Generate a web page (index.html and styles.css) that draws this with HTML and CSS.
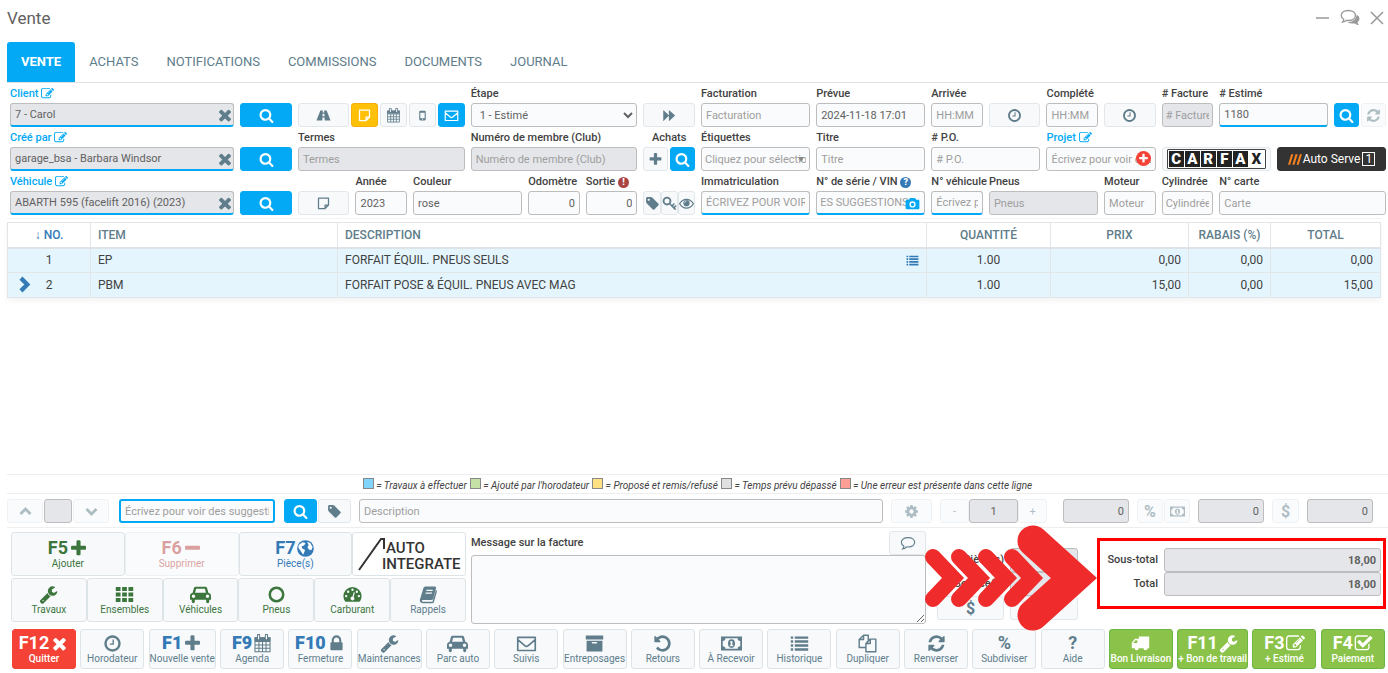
FILE: index.html
```html
<!DOCTYPE html>
<html lang="fr">
<head>
  <meta charset="UTF-8" />
  <meta name="viewport" content="width=device-width, initial-scale=1.0"/>
  <title>Vente</title>
  <link rel="stylesheet" href="styles.css">
</head>
<body>
  <!-- Icons -->
  <svg class="sprite" aria-hidden="true">
    <symbol id="search" viewBox="0 0 1792 1792"><path d="M1216 832q0-185-131.500-316.500t-316.500-131.500-316.500 131.500-131.500 316.500 131.500 316.500 316.500 131.500 316.500-131.500 131.500-316.500zm512 832q0 52-38 90t-90 38q-54 0-90-38l-343-342q-179 124-399 124-143 0-273.500-55.500t-225-150-150-225-55.500-273.500 55.500-273.500 150-225 225-150 273.500-55.500 273.500 55.500 225 150 150 225 55.500 273.500q0 220-124 399l343 343q37 37 37 90z"/></symbol>
    <symbol id="times" viewBox="0 0 1792 1792"><path d="M1490 1322q0 40-28 68l-136 136q-28 28-68 28t-68-28l-294-294-294 294q-28 28-68 28t-68-28l-136-136q-28-28-28-68t28-68l294-294-294-294q-28-28-28-68t28-68l136-136q28-28 68-28t68 28l294 294 294-294q28-28 68-28t68 28l136 136q28 28 28 68t-28 68l-294 294 294 294q28 28 28 68z"/></symbol>
    <symbol id="plus" viewBox="0 0 1792 1792"><path d="M1600 736v192q0 40-28 68t-68 28h-416v416q0 40-28 68t-68 28h-192q-40 0-68-28t-28-68v-416h-416q-40 0-68-28t-28-68v-192q0-40 28-68t68-28h416v-416q0-40 28-68t68-28h192q40 0 68 28t28 68v416h416q40 0 68 28t28 68z"/></symbol>
    <symbol id="minus" viewBox="0 0 1792 1792"><path d="M1600 736v192q0 40-28 68t-68 28h-1216q-40 0-68-28t-28-68v-192q0-40 28-68t68-28h1216q40 0 68 28t28 68z"/></symbol>
    <symbol id="clock" viewBox="0 0 1792 1792"><path d="M1024 544v448q0 14-9 23t-23 9h-320q-14 0-23-9t-9-23v-64q0-14 9-23t23-9h224v-352q0-14 9-23t23-9h64q14 0 23 9t9 23zm416 352q0-148-73-273t-198-198-273-73-273 73-198 198-73 273 73 273 198 198 273 73 273-73 198-198 73-273zm224 0q0 209-103 385.500t-279.500 279.500-385.500 103-385.500-103-279.500-279.500-103-385.500 103-385.500 279.500-279.500 385.500-103 385.500 103 279.500 279.500 103 385.500z"/></symbol>
    <symbol id="mail" viewBox="0 0 24 24"><path d="M2 5h20v15H2zM2 7.500l8 7q2 1.500 4 0l8-7" fill="none" stroke="currentColor" stroke-width="1.900" stroke-linejoin="round"/></symbol>
    <symbol id="wrench" viewBox="0 0 1792 1792"><path d="M448 1472q0-26-19-45t-45-19-45 19-19 45 19 45 45 19 45-19 19-45zm644-420l-682 682q-37 37-90 37-52 0-91-37l-106-108q-38-36-38-90 0-53 38-91l681-681q39 98 114.500 173.500t173.500 114.500zm634-435q0 39-23 106-47 134-164.500 217.500t-258.500 83.500q-185 0-316.500-131.500t-131.500-316.500 131.500-316.500 316.500-131.500q58 0 121.500 16.500t107.500 46.500q16 11 16 28t-16 28l-293 169v224l193 107q5-3 79-48.500t135.500-81 70.500-35.500q15 0 23.500 10t8.500 25z"/></symbol>
    <symbol id="lock" viewBox="0 0 1792 1792"><path d="M640 768h512v-192q0-106-75-181t-181-75-181 75-75 181v192zm832 96v576q0 40-28 68t-68 28h-960q-40 0-68-28t-28-68v-576q0-40 28-68t68-28h32v-192q0-184 132-316t316-132 316 132 132 316v192h32q40 0 68 28t28 68z"/></symbol>
    <symbol id="undo" viewBox="0 0 1792 1792"><path d="M1664 896q0 156-61 298t-164 245-245 164-298 61q-172 0-327-72.500t-264-204.500q-7-10-6.500-22.500t8.500-20.500l137-138q10-9 25-9 16 2 23 12 73 95 179 147t225 52q104 0 198.500-40.500t163.500-109.500 109.500-163.500 40.500-198.500-40.500-198.500-109.500-163.500-163.500-109.500-198.500-40.500q-98 0-188 35.500t-160 101.500l137 138q31 30 14 69-17 40-59 40h-448q-26 0-45-19t-19-45v-448q0-42 40-59 39-17 69 14l130 129q107-101 244.500-156.500t284.500-55.500q156 0 298 61t245 164 164 245 61 298z"/></symbol>
    <symbol id="refresh" viewBox="0 0 1792 1792"><path d="M1639 1056q0 5-1 7-64 268-268 434.500t-478 166.500q-146 0-282.500-55t-243.500-157l-129 129q-19 19-45 19t-45-19-19-45v-448q0-26 19-45t45-19h448q26 0 45 19t19 45-19 45l-137 137q71 66 161 102t187 36q134 0 250-65t186-179q11-17 53-117 8-23 30-23h192q13 0 22.500 9.500t9.500 22.500zm25-800v448q0 26-19 45t-45 19h-448q-26 0-45-19t-19-45 19-45l138-138q-148-137-349-137-134 0-250 65t-186 179q-11 17-53 117-8 23-30 23h-199q-13 0-22.500-9.500t-9.500-22.500v-7q65-268 270-434.500t480-166.500q146 0 284 55.500t245 156.500l130-129q19-19 45-19t45 19 19 45z"/></symbol>
    <symbol id="edit" viewBox="0 0 1792 1792"><path d="M888 1184l116-116-152-152-116 116v56h96v96h56zm440-720q-16-16-33 1l-350 350q-17 17-1 33t33-1l350-350q17-17 1-33zm80 594v190q0 119-84.500 203.500t-203.500 84.500h-832q-119 0-203.500-84.500t-84.500-203.500v-832q0-119 84.500-203.500t203.500-84.500h832q63 0 117 25 15 7 18 23 3 17-9 29l-49 49q-14 14-32 8-23-6-45-6h-832q-66 0-113 47t-47 113v832q0 66 47 113t113 47h832q66 0 113-47t47-113v-126q0-13 9-22l64-64q15-15 35-7t20 29zm-96-738l288 288-672 672h-288v-288zm444 132l-92 92-288-288 92-92q28-28 68-28t68 28l152 152q28 28 28 68t-28 68z"/></symbol>
    <symbol id="check" viewBox="0 0 1792 1792"><path d="M1472 930v318q0 119-84.500 203.500t-203.500 84.500h-832q-119 0-203.500-84.500t-84.500-203.500v-832q0-119 84.500-203.500t203.500-84.500h832q63 0 117 25 15 7 18 23 3 17-9 29l-49 49q-10 10-23 10-3 0-9-2-23-6-45-6h-832q-66 0-113 47t-47 113v832q0 66 47 113t113 47h832q66 0 113-47t47-113v-254q0-13 9-22l64-64q10-10 23-10 6 0 12 3 20 8 20 29zm231-489l-814 814q-24 24-57 24t-57-24l-430-430q-24-24-24-57t24-57l110-110q24-24 57-24t57 24l263 263 647-647q24-24 57-24t57 24l110 110q24 24 24 57t-24 57z"/></symbol>
    <symbol id="tag" viewBox="0 0 1792 1792"><path d="M576 448q0-53-37.500-90.500t-90.500-37.500-90.500 37.500-37.500 90.500 37.500 90.500 90.500 37.500 90.500-37.500 37.500-90.500zm1067 576q0 53-37 90l-491 492q-39 37-91 37-53 0-90-37l-715-716q-38-37-64.500-101t-26.500-117v-416q0-52 38-90t90-38h416q53 0 117 26.500t102 64.500l715 714q37 39 37 91z"/></symbol>
    <symbol id="cog" viewBox="0 0 1792 1792"><path d="M1152 896q0-106-75-181t-181-75-181 75-75 181 75 181 181 75 181-75 75-181zm512-109v222q0 12-8 23t-20 13l-185 28q-19 54-39 91 35 50 107 138 10 12 10 25t-9 23q-27 37-99 108t-94 71q-12 0-26-9l-138-108q-44 23-91 38-16 136-29 186-7 28-36 28h-222q-14 0-24.500-8.500t-11.500-21.500l-28-184q-49-16-90-37l-141 107q-10 9-25 9-14 0-25-11-126-114-165-168-7-10-7-23 0-12 8-23 15-21 51-66.500t54-70.500q-27-50-41-99l-183-27q-13-2-21-12.500t-8-23.500v-222q0-12 8-23t19-13l186-28q14-46 39-92-40-57-107-138-10-12-10-24 0-10 9-23 26-36 98.500-107.500t94.500-71.500q13 0 26 10l138 107q44-23 91-38 16-136 29-186 7-28 36-28h222q14 0 24.500 8.500t11.500 21.500l28 184q49 16 90 37l142-107q9-9 24-9 13 0 25 10 129 119 165 170 7 8 7 22 0 12-8 23-15 21-51 66.500t-54 70.500q26 50 41 98l183 28q13 2 21 12.500t8 23.500z"/></symbol>
    <symbol id="road" viewBox="0 0 24 24"><path fill-rule="evenodd" d="M7 4h4l-.3 3h2.600L13 4h4l6 15q.4 1-1 1h-8l-.4-5h-3.200L10 20H2q-1.400 0-1-1zM10.600 9l-.3 4h3.400l-.3-4z"/></symbol>
    <symbol id="note" viewBox="0 0 24 24"><path d="M4 3.500h16v11L14.500 20H4zM20 14.500h-5.500V20" fill="none" stroke="currentColor" stroke-width="2" stroke-linejoin="round"/></symbol>
    <symbol id="calendar" viewBox="0 0 24 24"><path d="M2.500 5h19v17.500h-19zM2.500 9.500h19M2.500 14h19M2.500 18h19M7.500 9.500v13M12 9.500v13M16.500 9.500v13" fill="none" stroke="currentColor" stroke-width="1.300"/><path d="M2 4h20v5H2z"/><path d="M7 1.500v5M17 1.500v5" stroke="currentColor" stroke-width="4" stroke-linecap="round"/><path d="M7 2v4M17 2v4" stroke="#fff" stroke-width="1.500" stroke-linecap="round"/></symbol>
    <symbol id="phone" viewBox="0 0 24 24"><path fill-rule="evenodd" d="M8 3h8q2 0 2 2v14q0 2-2 2H8q-2 0-2-2V5q0-2 2-2zm0 4v10h8V7zm4 11a1 1 0 100 2 1 1 0 000-2z"/></symbol>
    <symbol id="forward" viewBox="0 0 24 24"><path d="M2 3l9 8.500V3l10 9-10 9v-8.500L2 21z"/></symbol>
    <symbol id="key" viewBox="0 0 24 24"><circle cx="8" cy="8" r="5.500" fill="none" stroke="currentColor" stroke-width="3"/><path d="M12 12l9 9M16 16l3-3M19 19l3-3" stroke="currentColor" stroke-width="2.500" stroke-linecap="round"/></symbol>
    <symbol id="eye" viewBox="0 0 24 24"><path d="M1 12.500Q5 5.500 12 5.500t11 7q-4 7-11 7t-11-7z" fill="none" stroke="currentColor" stroke-width="2"/><circle cx="12" cy="11.500" r="5"/><path d="M9 11q0-3 3-3" fill="none" stroke="#fff" stroke-width="1"/></symbol>
    <symbol id="camera" viewBox="0 0 24 24"><path fill-rule="evenodd" d="M8 3h8l2 3h3q2 0 2 2v11q0 2-2 2H3q-2 0-2-2V8q0-2 2-2h3zm4 5.500a5 5 0 100 10 5 5 0 000-10zm0 2.200a2.800 2.800 0 110 5.600 2.800 2.800 0 010-5.600z"/></symbol>
    <symbol id="list" viewBox="0 0 24 24"><path d="M1 3h3v3H1zM6 3h17v3H6zM1 8h3v3H1zM6 8h17v3H6zM1 13h3v3H1zM6 13h17v3H6zM1 18h3v3H1zM6 18h17v3H6z"/></symbol>
    <symbol id="up" viewBox="0 0 24 24"><path d="M4 16l8-8 8 8" fill="none" stroke="currentColor" stroke-width="4.500"/></symbol>
    <symbol id="down" viewBox="0 0 24 24"><path d="M4 8l8 8 8-8" fill="none" stroke="currentColor" stroke-width="4.500"/></symbol>
    <symbol id="right" viewBox="0 0 24 24"><path d="M7 3l9 9-9 9" fill="none" stroke="currentColor" stroke-width="6"/></symbol>
    <symbol id="globe" viewBox="0 0 24 24"><circle cx="12" cy="12" r="10.500"/><path d="M3.500 7.500L8 4l4 1-1.500 3L7 9.500 8 12l3.500 2-2.500 6-3-5-3-4zM14 3.500l4 1.500 3 5-1.500 4-3-.5-2-3 1.500-3z" fill="#fff"/></symbol>
    <symbol id="th" viewBox="0 0 24 24"><path d="M1 2.500h6v5H1zM9 2.500h6v5H9zM17 2.500h6v5h-6zM1 9.500h6v5H1zM9 9.500h6v5H9zM17 9.500h6v5h-6zM1 16.500h6v5H1zM9 16.500h6v5H9zM17 16.500h6v5h-6z"/></symbol>
    <symbol id="car" viewBox="0 0 24 24"><path fill-rule="evenodd" d="M6.500 3h11q1.500 0 2 1.500L21 10q3 .5 3 3v5h-2v2q0 2-1.800 2T18.500 20v-2h-13v2q0 2-1.700 2T2 20v-2H0v-5q0-2.500 3-3l1.500-5.500Q5 3 6.500 3zM7 5.500L5.800 10h12.400L17 5.500zM4 12a2 2 0 100 4 2 2 0 000-4zm16 0a2 2 0 100 4 2 2 0 000-4z"/></symbol>
    <symbol id="circle" viewBox="0 0 24 24"><circle cx="12" cy="12" r="8.500" fill="none" stroke="currentColor" stroke-width="3.200"/></symbol>
    <symbol id="gauge" viewBox="0 0 24 24"><path fill-rule="evenodd" d="M12 2.500a11.500 11.500 0 0111.500 11.500q0 3.500-2 6.500-.4.500-1 .5h-17q-.6 0-1-.5-2-3-2-6.500A11.500 11.500 0 0112 2.500zM4 12.500a1.500 1.500 0 100 3 1.500 1.500 0 000-3zm2.500-5.500a1.500 1.500 0 100 3 1.500 1.500 0 000-3zM12 4.500a1.500 1.500 0 100 3 1.500 1.500 0 000-3zM17.500 7a1.500 1.500 0 100 3 1.500 1.500 0 000-3zm2.500 5.500a1.500 1.500 0 100 3 1.500 1.500 0 000-3zM13.500 9L12 14.500a2.500 2.500 0 101.500.5L15 9.500z"/></symbol>
    <symbol id="book" viewBox="0 0 24 24"><path fill-rule="evenodd" d="M8 2h12q2 0 1.500 2L18 17q-.5 2-2.500 2H5q-1.500 0-1.500 1T5 21h12l4.500-15q1.500 1 1 2.500L19 21q-.6 2-2.500 2H4.500Q1 22.500 1 19L5.500 4Q6 2 8 2zm1.500 4L9 7.500h8l.5-1.500zm-1 3.500L8 11h8l.5-1.500z"/></symbol>
    <symbol id="archive" viewBox="0 0 24 24"><path fill-rule="evenodd" d="M1 2h22v5H1zM2 8.500h20V22H2zM9.500 10q-1 0-1 1t1 1h5q1 0 1-1t-1-1z"/></symbol>
    <symbol id="money" viewBox="0 0 24 24"><path fill-rule="evenodd" d="M0 4h24v16H0zM5 6q0 3-3 3v6q3 0 3 3h14q0-3 3-3V9q-3 0-3-3zm7 1a4 5 0 110 10 4 5 0 010-10zm-2 3l1 1v3h-1v1h4v-1h-1V9h-1z"/></symbol>
    <symbol id="files" viewBox="0 0 24 24"><path d="M7 1.500h6V9l-3 3v5H1.500V7zM7 1.500V7H1.500M15 6.500h7.500v16H10V12zM15.500 6.500V12H10" fill="none" stroke="currentColor" stroke-width="1.800" stroke-linejoin="round"/></symbol>
    <symbol id="truck" viewBox="0 0 24 24"><path fill-rule="evenodd" d="M10 3h13v15h-2a2.600 2.600 0 01-5.200 0h-6a2.600 2.600 0 01-5.200 0H1v-7l4-5h5zM5.500 8L3 11.500h5V8z"/></symbol>
    <symbol id="comment" viewBox="0 0 24 24"><path d="M12 4c6 0 10 3 10 7s-4 7-10 7l-2-.2Q7 21 4 21q2-2 2-4-4-2-4-6c0-4 4-7 10-7z" fill="none" stroke="currentColor" stroke-width="1.700"/></symbol>
    <symbol id="comments" viewBox="0 0 24 24"><path d="M10 3c5 0 8.500 2.500 8.500 6S15 15 10 15l-2-.2Q5 17 3 17q1.500-1.500 1.500-3.500Q1.500 12 1.500 9c0-3.500 3.500-6 8.500-6z" fill="none" stroke="currentColor" stroke-width="1.600"/><path d="M20 8q3.500 1.500 3.500 5 0 2.500-2.500 4 0 2 2 3.500-3 0-5.500-2-5 .8-8.500-1.500 10 0 11-9z"/></symbol>
  </svg>

  <header class="titlebar">
    <h1>Vente</h1>
    <div class="window-actions">
      <button aria-label="Réduire"><svg viewBox="0 0 16 16"><path d="M1 8h13" stroke="currentColor" stroke-width="1.500"/></svg></button>
      <button class="chat" aria-label="Discussion"><svg><use href="#comments"/></svg></button>
      <button aria-label="Fermer"><svg viewBox="0 0 16 16"><path d="M2 2l12 12M14 2L2 14" stroke="currentColor" stroke-width="1.500"/></svg></button>
    </div>
  </header>

  <nav class="tabs">
    <a class="active" href="#vente">VENTE</a>
    <a href="#achats">ACHATS</a>
    <a href="#notifications">NOTIFICATIONS</a>
    <a href="#commissions">COMMISSIONS</a>
    <a href="#documents">DOCUMENTS</a>
    <a href="#journal">JOURNAL</a>
  </nav>

  <form class="sale-form">
    <!-- Client -->
    <div class="field span-4">
      <label class="linked" for="client">Client <svg><use href="#edit"/></svg></label>
      <div class="control"><input class="locked suggest" id="client" value="7 - Carol" readonly><button type="button" class="clear" aria-label="Effacer"><svg><use href="#times"/></svg></button></div>
    </div>
    <button type="button" class="btn primary" aria-label="Chercher client"><svg><use href="#search"/></svg></button>
    <div class="button-row span-3">
      <button type="button" class="btn grow" aria-label="Route"><svg><use href="#road"/></svg></button>
      <button type="button" class="btn warning" aria-label="Note"><svg><use href="#note"/></svg></button>
      <button type="button" class="btn" aria-label="Calendrier"><svg><use href="#calendar"/></svg></button>
      <button type="button" class="btn small-icon" aria-label="Mobile"><svg><use href="#phone"/></svg></button>
      <button type="button" class="btn primary" aria-label="Courriel"><svg><use href="#mail"/></svg></button>
    </div>
    <div class="field span-3"><label for="etape">Étape</label><select id="etape"><option>1 - Estimé</option></select></div>
    <button type="button" class="btn" aria-label="Étape suivante"><svg><use href="#forward"/></svg></button>
    <div class="field span-2"><label for="facturation">Facturation</label><input id="facturation" placeholder="Facturation"></div>
    <div class="field span-2"><label for="prevue">Prévue</label><input id="prevue" value="2024-11-18 17:01"></div>
    <div class="field"><label for="arrivee">Arrivée</label><input id="arrivee" placeholder="HH:MM"></div>
    <button type="button" class="btn" aria-label="Heure d'arrivée"><svg><use href="#clock"/></svg></button>
    <div class="field"><label for="complete">Complété</label><input id="complete" placeholder="HH:MM"></div>
    <button type="button" class="btn" aria-label="Heure complétée"><svg><use href="#clock"/></svg></button>
    <div class="field"><label for="facture"># Facture</label><input class="locked tight" id="facture" placeholder="# Facture" readonly></div>
    <div class="field span-2"><label for="estime"># Estimé</label><input class="suggest" id="estime" value="1180"></div>
    <div class="button-row">
      <button type="button" class="btn primary" aria-label="Chercher estimé"><svg><use href="#search"/></svg></button>
      <button type="button" class="btn" aria-label="Rafraîchir" disabled><svg><use href="#refresh"/></svg></button>
    </div>

    <!-- Créé par -->
    <div class="field span-4">
      <label class="linked" for="createur">Créé par <svg><use href="#edit"/></svg></label>
      <div class="control"><input class="locked suggest" id="createur" value="garage_bsa - Barbara Windsor" readonly><button type="button" class="clear" aria-label="Effacer"><svg><use href="#times"/></svg></button></div>
    </div>
    <button type="button" class="btn primary" aria-label="Chercher employé"><svg><use href="#search"/></svg></button>
    <div class="field span-3"><label for="termes">Termes</label><input class="locked" id="termes" placeholder="Termes" readonly></div>
    <div class="field span-3"><label for="membre">Numéro de membre (Club)</label><input class="locked" id="membre" placeholder="Numéro de membre (Club)" readonly></div>
    <div class="field">
      <span class="caption">Achats</span>
      <div class="button-row">
        <button type="button" class="btn" aria-label="Ajouter achat"><svg><use href="#plus"/></svg></button>
        <button type="button" class="btn primary" aria-label="Chercher achat"><svg><use href="#search"/></svg></button>
      </div>
    </div>
    <div class="field span-2"><label for="etiquettes">Étiquettes</label><div class="control"><input class="tight" id="etiquettes" placeholder="Cliquez pour sélectionner"><span class="caret"></span></div></div>
    <div class="field span-2"><label for="titre">Titre</label><input id="titre" placeholder="Titre"></div>
    <div class="field span-2"><label for="po"># P.O.</label><input id="po" placeholder="# P.O."></div>
    <div class="field span-2">
      <label class="linked" for="projet">Projet <svg><use href="#edit"/></svg></label>
      <div class="control"><input id="projet" placeholder="Écrivez pour voir des suggestions"><button type="button" class="add" aria-label="Ajouter projet"><svg><use href="#plus"/></svg></button></div>
    </div>
    <button type="button" class="btn span-2 carfax" aria-label="CARFAX"><span class="carfax-logo"><b>C</b><b>A</b><b>R</b><b>F</b><b>A</b><b class="last">X</b></span></button>
    <button type="button" class="btn span-2 autoserve"><svg viewBox="0 0 14 12"><path d="M0 11L3 1h2L2 11zM4 11L7 1h2L6 11zM8 11l3-10h2l-3 10z"/></svg>Auto Serve<span>1</span></button>

    <!-- Véhicule -->
    <div class="field span-4">
      <label class="linked" for="vehicule">Véhicule <svg><use href="#edit"/></svg></label>
      <div class="control"><input class="locked suggest" id="vehicule" value="ABARTH 595 (facelift 2016) (2023)" readonly><button type="button" class="clear" aria-label="Effacer"><svg><use href="#times"/></svg></button></div>
    </div>
    <button type="button" class="btn primary" aria-label="Chercher véhicule"><svg><use href="#search"/></svg></button>
    <button type="button" class="btn" aria-label="Note véhicule"><svg><use href="#note"/></svg></button>
    <div class="field"><label for="annee">Année</label><input id="annee" value="2023"></div>
    <div class="field span-2"><label for="couleur">Couleur</label><input id="couleur" value="rose"></div>
    <div class="field"><label for="odometre">Odomètre</label><input class="number" id="odometre" value="0"></div>
    <div class="field"><label for="sortie">Sortie <i class="badge danger">!</i></label><input class="number" id="sortie" value="0"></div>
    <div class="button-row packed">
      <button type="button" class="btn" aria-label="Étiquette"><svg><use href="#tag"/></svg></button>
      <button type="button" class="btn" aria-label="Clé"><svg><use href="#key"/></svg></button>
      <button type="button" class="btn" aria-label="Voir"><svg><use href="#eye"/></svg></button>
    </div>
    <div class="field span-2"><label for="immat">Immatriculation</label><input class="suggest" id="immat" placeholder="ÉCRIVEZ POUR VOIR DES SUGGESTIONS"></div>
    <div class="field span-2"><label for="vin">N° de série / VIN <i class="badge info">?</i></label><div class="control"><input class="suggest tight" id="vin" placeholder="ES SUGGESTIONS"><button type="button" class="clear photo" aria-label="Photo"><svg><use href="#camera"/></svg></button></div></div>
    <div class="field"><label for="novehicule">N° véhicule</label><input class="suggest" id="novehicule" placeholder="Écrivez pour voir"></div>
    <div class="field span-2"><label for="pneus">Pneus</label><input class="locked" id="pneus" placeholder="Pneus" readonly></div>
    <div class="field"><label for="moteur">Moteur</label><input id="moteur" placeholder="Moteur"></div>
    <div class="field"><label for="cylindree">Cylindrée</label><input class="tight" id="cylindree" placeholder="Cylindrée"></div>
    <div class="field span-3"><label for="carte">N° carte</label><input id="carte" placeholder="Carte"></div>
  </form>

  <main class="lines">
    <table>
      <colgroup><col class="c-no"><col class="c-item"><col><col class="c-qty"><col class="c-price"><col class="c-disc"><col class="c-total"></colgroup>
      <thead>
        <tr><th class="sorted">↓ NO.</th><th class="left">ITEM</th><th class="left">DESCRIPTION</th><th>QUANTITÉ</th><th>PRIX</th><th>RABAIS (%)</th><th>TOTAL</th></tr>
      </thead>
      <tbody>
        <tr><td class="center">1</td><td>EP</td><td><div class="desc">FORFAIT ÉQUIL. PNEUS SEULS <svg><use href="#list"/></svg></div></td><td class="center">1.00</td><td class="num">0,00</td><td class="num">0,00</td><td class="num">0,00</td></tr>
        <tr><td class="center current"><svg><use href="#right"/></svg>2</td><td>PBM</td><td>FORFAIT POSE &amp; ÉQUIL. PNEUS AVEC MAG</td><td class="center">1.00</td><td class="num">15,00</td><td class="num">0,00</td><td class="num">15,00</td></tr>
      </tbody>
    </table>
  </main>

  <div class="legend">
    <span><i class="todo"></i> = Travaux à effectuer</span>
    <span><i class="punch"></i> = Ajouté par l'horodateur</span>
    <span><i class="refused"></i> = Proposé et remis/refusé</span>
    <span><i class="late"></i> = Temps prévu dépassé</span>
    <span><i class="error"></i> = Une erreur est présente dans cette ligne</span>
  </div>

  <!-- Line editor -->
  <div class="line-editor">
    <div class="group nav-group">
      <button class="btn" aria-label="Monter" disabled><svg><use href="#up"/></svg></button>
      <input class="locked" aria-label="Ligne" readonly>
      <button class="btn" aria-label="Descendre" disabled><svg><use href="#down"/></svg></button>
    </div>
    <input class="item-search" aria-label="Item" placeholder="Écrivez pour voir des suggestions">
    <div class="group item-actions">
      <button class="btn primary" aria-label="Chercher item"><svg><use href="#search"/></svg></button>
      <button class="btn" aria-label="Étiquettes"><svg><use href="#tag"/></svg></button>
    </div>
    <input class="item-desc" aria-label="Description" placeholder="Description">
    <button class="btn gear" aria-label="Options" disabled><svg><use href="#cog"/></svg></button>
    <div class="group qty">
      <button class="btn" disabled>-</button>
      <input class="locked" aria-label="Quantité" value="1" readonly>
      <button class="btn" disabled>+</button>
    </div>
    <input class="locked number amount" aria-label="Prix" value="0" readonly>
    <div class="group modes">
      <button class="btn symbol" disabled>%</button>
      <button class="btn" aria-label="Montant" disabled><svg><use href="#money"/></svg></button>
    </div>
    <input class="locked number amount" aria-label="Rabais" value="0" readonly>
    <button class="btn symbol dollar" disabled>$</button>
    <input class="locked number amount" aria-label="Total ligne" value="0" readonly>
  </div>

  <section class="summary">
    <div class="adders">
      <div class="adder-row">
        <button class="tile green"><span class="top">F5 <svg><use href="#plus"/></svg></span>Ajouter</button>
        <button class="tile red-text" disabled><span class="top">F6 <svg><use href="#minus"/></svg></span>Supprimer</button>
        <button class="tile blue"><span class="top">F7 <svg><use href="#globe"/></svg></span>Pièce(s)</button>
        <button class="tile integrate" aria-label="Auto Integrate">
          <svg viewBox="0 0 108 36"><path d="M4 34L26 3h3v10" fill="none" stroke="currentColor" stroke-width="2"/><text x="31" y="17">AUTO</text><text x="27" y="33">INTEGRATE</text></svg>
        </button>
      </div>
      <div class="adder-row">
        <button class="tile green"><span class="top"><svg><use href="#wrench"/></svg></span>Travaux</button>
        <button class="tile green"><span class="top"><svg><use href="#th"/></svg></span>Ensembles</button>
        <button class="tile green"><span class="top"><svg class="wide"><use href="#car"/></svg></span>Véhicules</button>
        <button class="tile green"><span class="top"><svg><use href="#circle"/></svg></span>Pneus</button>
        <button class="tile green"><span class="top"><svg><use href="#gauge"/></svg></span>Carburant</button>
        <button class="tile"><span class="top"><svg><use href="#book"/></svg></span>Rappels</button>
      </div>
    </div>

    <div class="message">
      <div class="message-head">
        <label for="message">Message sur la facture</label>
        <button class="btn" aria-label="Commentaire"><svg><use href="#comment"/></svg></button>
      </div>
      <textarea id="message"></textarea>
    </div>

    <div class="amounts parts">
      <label for="pieces">Pièce(s)</label><input class="locked number" id="pieces" readonly>
      <label for="services">Service(s)</label><input class="locked number" id="services" readonly>
      <button class="btn symbol">$</button><button class="btn" aria-label="Détails"></button>
    </div>

    <div class="totals">
      <div class="amounts">
        <label for="soustotal">Sous-total</label><input class="locked number" id="soustotal" value="18,00" readonly>
        <label for="total">Total</label><input class="locked number" id="total" value="18,00" readonly>
      </div>
      <svg class="arrows" viewBox="0 0 172 106" aria-hidden="true">
        <g fill="none" stroke="#ef2b2b" stroke-width="16" stroke-linecap="round">
          <path d="M8 32l20 21-20 21"/>
          <path d="M34 32l20 21-20 21"/>
          <path d="M61 32l20 21-20 21"/>
          <path d="M87 32l20 21-20 21"/>
          <path d="M108 16l41 37-41 37" stroke-width="31"/>
        </g>
      </svg>
    </div>
  </section>

  <footer class="actions">
    <button class="tile danger-fill"><span class="top">F12 <svg><use href="#times"/></svg></span>Quitter</button>
    <button class="tile"><span class="top"><svg><use href="#clock"/></svg></span>Horodateur</button>
    <button class="tile"><span class="top"><b>F1</b> <svg><use href="#plus"/></svg></span>Nouvelle vente</button>
    <button class="tile"><span class="top"><b>F9</b> <svg><use href="#calendar"/></svg></span>Agenda</button>
    <button class="tile"><span class="top"><b>F10</b> <svg><use href="#lock"/></svg></span>Fermeture</button>
    <button class="tile"><span class="top"><svg><use href="#wrench"/></svg></span>Maintenances</button>
    <button class="tile"><span class="top"><svg class="wide"><use href="#car"/></svg></span>Parc auto</button>
    <button class="tile"><span class="top"><svg class="wide"><use href="#mail"/></svg></span>Suivis</button>
    <button class="tile"><span class="top"><svg><use href="#archive"/></svg></span>Entreposages</button>
    <button class="tile"><span class="top"><svg><use href="#undo"/></svg></span>Retours</button>
    <button class="tile"><span class="top"><svg class="wide"><use href="#money"/></svg></span>À Recevoir</button>
    <button class="tile"><span class="top"><svg><use href="#list"/></svg></span>Historique</button>
    <button class="tile"><span class="top"><svg><use href="#files"/></svg></span>Dupliquer</button>
    <button class="tile"><span class="top"><svg><use href="#refresh"/></svg></span>Renverser</button>
    <button class="tile"><span class="top">%</span>Subdiviser</button>
    <button class="tile"><span class="top">?</span>Aide</button>
    <button class="tile success-fill"><span class="top"><svg><use href="#truck"/></svg></span>Bon Livraison</button>
    <button class="tile success-fill"><span class="top">F11 <svg><use href="#wrench"/></svg></span>+ Bon de travail</button>
    <button class="tile success-fill"><span class="top">F3 <svg><use href="#edit"/></svg></span>+ Estimé</button>
    <button class="tile success-fill"><span class="top">F4 <svg><use href="#check"/></svg></span>Paiement</button>
  </footer>
</body>
</html>
```

FILE: styles.css
```css
* {
  box-sizing: border-box;
}

body {
  margin: 0;
  min-height: 100vh;
  display: flex;
  flex-direction: column;
  font-family: Roboto, sans-serif;
  font-size: 11px;
  color: #424242;
  background: #fff;
}

svg {
  fill: currentColor;
  flex: none;
}

.sprite {
  position: absolute;
  width: 0;
  height: 0;
}

button,
input,
select,
textarea {
  font: inherit;
  color: inherit;
  min-width: 0;
}

button {
  padding: 0;
  cursor: pointer;
}

/* Title bar */
.titlebar {
  display: flex;
  justify-content: space-between;
  align-items: center;
  height: 36px;
  padding: 0 3px 0 7px;
}

.titlebar h1 {
  margin: 0;
  font-size: 17px;
  font-weight: 400;
  color: #616161;
}

.window-actions {
  display: flex;
  align-items: center;
  gap: 9px;
}

.window-actions button {
  display: flex;
  border: none;
  background: none;
  color: #999;
}

.window-actions svg {
  width: 16px;
  height: 16px;
}

.window-actions .chat svg {
  width: 20px;
  height: 20px;
}

/* Tabs */
.tabs {
  display: flex;
  margin: 6px 0 0 7px;
  border-bottom: 1px solid #e0e0e0;
}

.tabs a {
  padding: 0 14px;
  line-height: 40px;
  font-size: 13px;
  color: #607d8b;
  text-decoration: none;
}

.tabs .active {
  background: #03a9f4;
  color: #fff;
  font-weight: 700;
  border-radius: 3px 3px 0 0;
}

/* Form */
.sale-form {
  display: grid;
  grid-template-columns: repeat(24, minmax(0, 1fr));
  gap: 3px 6px;
  align-items: end;
  padding: 3px 2px 3px 10px;
}

.span-2 { grid-column: span 2; }
.span-3 { grid-column: span 3; }
.span-4 { grid-column: span 4; }

label,
.caption {
  display: block;
  line-height: 16px;
  margin-bottom: 1px;
  font-size: 11px;
  font-weight: 500;
  white-space: nowrap;
}

.caption {
  text-align: center;
}

.linked {
  color: #03a9f4;
}

label svg {
  width: 13px;
  height: 13px;
  vertical-align: -3px;
}

input,
select {
  display: block;
  width: 100%;
  height: 24px;
  padding: 0 4px;
  border: 1px solid #bdbdbd;
  border-radius: 3px;
  background: #fafbfc;
  color: #616161;
}

.tight {
  padding: 0 3px;
}

input::placeholder {
  color: #9e9e9e;
}

.locked {
  background: #e4e6ea;
}

.suggest {
  border-bottom: 2px solid #03a9f4;
}

.number {
  text-align: right;
}

.control {
  position: relative;
}

.clear {
  position: absolute;
  right: 0;
  top: 3px;
  display: flex;
  border: none;
  background: none;
  color: #607d8b;
}

.clear svg {
  width: 18px;
  height: 18px;
}

.photo {
  right: 5px;
  top: 5px;
  color: #03a9f4;
}

.photo svg {
  width: 15px;
  height: 15px;
}

.caret {
  position: absolute;
  right: 6px;
  top: 10px;
  border: 3px solid transparent;
  border-top: 5px solid #888;
  border-bottom: none;
}

.add {
  position: absolute;
  right: 5px;
  top: 4px;
  display: flex;
  align-items: center;
  justify-content: center;
  width: 15px;
  height: 15px;
  border: none;
  border-radius: 50%;
  background: #f44336;
  color: #fff;
}

.add svg {
  width: 11px;
  height: 11px;
}

.badge {
  display: inline-block;
  width: 11px;
  height: 11px;
  border-radius: 50%;
  font-size: 9px;
  line-height: 11px;
  font-style: normal;
  font-weight: 900;
  text-align: center;
  color: #fff;
}

.badge.danger { background: #a94442; }
.badge.info { background: #337ab7; }

.btn {
  display: flex;
  align-items: center;
  justify-content: center;
  height: 24px;
  border: 1px solid #e1e7ea;
  border-radius: 3px;
  background: #f7f9fb;
  color: #607d8b;
}

.btn svg {
  width: 15px;
  height: 15px;
}

.btn:disabled,
.tile:disabled {
  opacity: 0.5;
}

.primary {
  background: #03a9f4;
  border-color: #03a9f4;
  color: #fff;
}

.warning {
  background: #ffc107;
  border-color: #f5ae0a;
  color: #fff;
}

.small-icon svg {
  width: 13px;
  height: 13px;
}

.button-row {
  display: flex;
  gap: 2px;
}

.button-row .btn {
  flex: 1;
}

.sale-form .span-3 .btn {
  flex: 0 0 27px;
}

.sale-form .span-3 .grow {
  flex: 1;
}

.packed {
  gap: 0;
}

.carfax-logo {
  display: flex;
  gap: 1px;
  padding: 1px;
  border: 1px solid #444;
  border-radius: 1px;
  background: #fff;
}

.carfax-logo b {
  width: 15px;
  line-height: 16px;
  background: #222;
  color: #fff;
  font-size: 15px;
  font-weight: 900;
}

.carfax-logo .last {
  background: #fff;
  color: #222;
}

.autoserve {
  border-color: #333;
  background: #333;
  color: #fff;
  font-size: 12px;
}

.autoserve svg {
  color: #f5821f;
}

.autoserve span {
  margin-left: 2px;
  padding: 0 2px;
  border: 1px solid #fff;
  line-height: 12px;
}

/* Lines */
.lines {
  flex: 1;
  margin: 0 7px 0 7px;
  padding-top: 3px;
  border-top: 1px solid #f3f3f3;
}

table {
  width: 100%;
  table-layout: fixed;
  border-collapse: collapse;
  font-size: 12px;
  box-shadow: 0 3px 5px #f3f3f3;
}

.c-no { width: 83px; }
.c-item { width: 247px; }
.c-qty { width: 124px; }
.c-price { width: 138px; }
.c-disc { width: 82px; }
.c-total { width: 110px; }

th,
td {
  height: 25px;
  padding: 0 7px;
  border: 1px solid #e3e6e8;
  text-align: left;
}

th {
  color: #607d8b;
  font-weight: 500;
  text-align: center;
}

thead tr {
  border-bottom: 2px solid #dde3e6;
}

th.left { text-align: left; }
th.sorted { color: #337ab7; }

tbody {
  background: #e4f5fd;
}

.center { text-align: center; }
.num { text-align: right; }

.desc {
  display: flex;
  justify-content: space-between;
  align-items: center;
}

td svg {
  width: 13px;
  height: 13px;
  color: #337ab7;
}

.current {
  position: relative;
}

.current svg {
  position: absolute;
  left: 8px;
  top: 3px;
  width: 17px;
  height: 17px;
}

/* Legend */
.legend {
  display: flex;
  justify-content: center;
  align-items: center;
  gap: 3px;
  height: 20px;
  margin: 0 0 0 7px;
  border-top: 1px solid #eee;
  border-bottom: 1px solid #eee;
  font-size: 10px;
  font-style: italic;
}

.legend i {
  display: inline-block;
  width: 11px;
  height: 11px;
  border: 1px solid #888;
}

.todo { background: #81d4fa; }
.punch { background: #c5e1a5; }
.refused { background: #ffe082; }
.late { background: #e0e0e0; }
.error { background: #ff9e95; }

/* Line editor */
.line-editor {
  display: flex;
  gap: 8px;
  margin-left: 7px;
  padding: 5px 15px 4px 0;
  border-bottom: 1px solid #eee;
}

.group {
  display: flex;
  gap: 1px;
}

.nav-group .btn { width: 36px; }
.nav-group input { width: 28px; }

.line-editor .item-search {
  width: 156px;
  margin: 0 1px 0 2px;
  border: 2px solid #03a9f4;
}

.item-actions .btn { width: 33px; }
.line-editor .item-desc { flex: 1; }
.gear { width: 41px; }
.qty { gap: 0; margin-right: 8px; }
.qty .btn { width: 29px; }
.qty input { width: 49px; text-align: center; }
.line-editor .amount { width: 66px; }
.modes .btn { width: 26px; }
.dollar { width: 27px; }

.symbol {
  font-size: 16px;
  font-weight: 700;
}

/* Summary */
.summary {
  display: flex;
  padding: 3px 2px 0 11px;
}

.adders {
  flex: 455;
  display: flex;
  flex-direction: column;
  gap: 2px;
  padding-top: 1px;
}

.adder-row {
  display: flex;
}

.adder-row .tile {
  flex: 1 1 0;
  height: 44px;
}

.tile {
  display: flex;
  flex-direction: column;
  align-items: center;
  justify-content: center;
  border: 1px solid #dde4e8;
  border-radius: 3px;
  background: #f7f9fb;
  color: #607d8b;
  font-size: 10px;
  line-height: 12px;
  white-space: nowrap;
}

.top {
  display: flex;
  align-items: center;
  gap: 1px;
  height: 19px;
  font-size: 18px;
  font-weight: 700;
}

.top b {
  color: #337ab7;
}

.top svg {
  width: 19px;
  height: 19px;
}

.top .wide {
  width: 21px;
  height: 21px;
}

.green { color: #3c763d; }
.blue { color: #337ab7; }
.red-text { color: #b74442; }

.integrate {
  color: #333;
  background: #fff;
}

.integrate svg {
  width: 108px;
  height: 36px;
}

.integrate text {
  font-size: 15px;
  font-weight: 500;
}

.message {
  flex: 455;
  margin-left: 5px;
}

.message-head {
  display: flex;
  justify-content: space-between;
  align-items: center;
}

.message-head .btn {
  width: 37px;
}

.message-head .btn svg {
  width: 16px;
  height: 16px;
}

textarea {
  display: block;
  width: 100%;
  height: 69px;
  border: 1px solid #bdbdbd;
  border-radius: 3px;
  background: #fafbfc;
}

.amounts {
  display: grid;
  align-items: center;
}

.amounts label {
  margin: 0;
  text-align: right;
}

.parts {
  flex: 141;
  grid-template-columns: 67px 1fr;
  column-gap: 6px;
  align-content: start;
  margin-left: 11px;
  padding-top: 17px;
}

.totals {
  flex: 277;
  position: relative;
  align-self: flex-start;
  margin: 7px 0 0 19px;
  padding: 7px 2px 10px 4px;
  border: 3px solid #f00;
}

.totals .amounts {
  grid-template-columns: 54px 1fr;
  column-gap: 6px;
}

.totals input {
  font-weight: 700;
}

.arrows {
  position: absolute;
  width: 172px;
  height: 106px;
  left: -175px;
  top: -16px;
}

/* Bottom actions */
.actions {
  display: flex;
  justify-content: space-between;
  margin: 5px 3px 4px 12px;
}

.actions .tile {
  min-width: 64px;
  height: 40px;
  padding: 0;
}

.actions .danger-fill {
  background: #f44336;
  border-color: #f44336;
  color: #fff;
  font-weight: 500;
}

.actions .success-fill {
  background: #8bc34a;
  border-color: #6cb744;
  color: #fff;
  font-weight: 500;
}
```
